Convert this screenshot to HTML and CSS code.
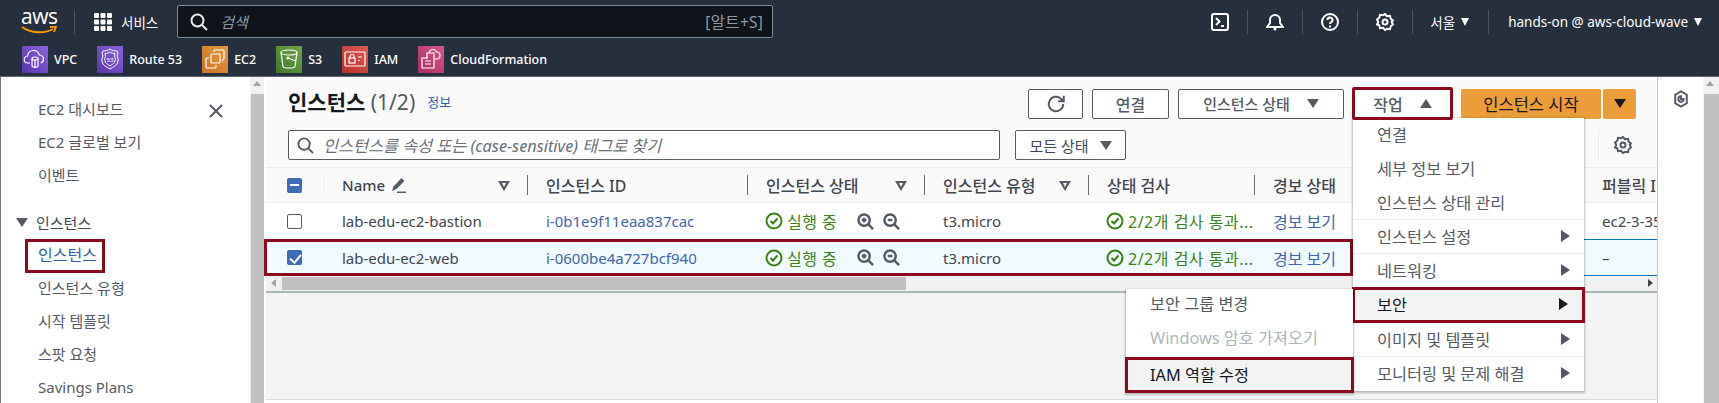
FILE: index.html
```html
<!DOCTYPE html>
<html lang="ko">
<head>
    <meta charset="UTF-8">
    <title>인스턴스 | EC2</title>
    <link rel="stylesheet" href="styles.css">
</head>
<body>
    <header class="nav">
        <div class="nav-top">
            <div class="logo">
                <span class="logo-word">aws</span>
                <svg class="logo-smile" viewBox="0 0 36 9" width="36" height="9"><path d="M1 1c9 6.500 22 7 31 2" fill="none" stroke="#f90" stroke-width="2"/><path d="M29 1l6-.5-2 5.500" fill="none" stroke="#f90" stroke-width="1.800"/></svg>
            </div>
            <span class="nav-sep nav-sep-logo"></span>
            <svg class="grid-icon" viewBox="0 0 18 18" width="18" height="18" fill="#fff"><rect width="5" height="5" rx="1"/><rect x="6.500" width="5" height="5" rx="1"/><rect x="13" width="5" height="5" rx="1"/><rect y="6.500" width="5" height="5" rx="1"/><rect x="6.500" y="6.500" width="5" height="5" rx="1"/><rect x="13" y="6.500" width="5" height="5" rx="1"/><rect y="13" width="5" height="5" rx="1"/><rect x="6.500" y="13" width="5" height="5" rx="1"/><rect x="13" y="13" width="5" height="5" rx="1"/></svg>
            <span class="nav-services">서비스</span>
            <div class="nav-search">
                <svg viewBox="0 0 18 18" width="18" height="18" fill="none" stroke="#e9ebed" stroke-width="2"><circle cx="7.500" cy="7.500" r="6"/><path d="M12 12l5 5"/></svg>
                <span class="nav-search-text">검색</span>
                <span class="nav-search-key">[알트+S]</span>
            </div>
            <div class="nav-right">
                <span class="nav-icon"><svg viewBox="0 0 18 18" width="18" height="18" fill="none" stroke="#fff" stroke-width="2"><rect x="1" y="1" width="16" height="16" rx="2"/><path d="M5 5l3.500 3.500L5 12M10 13h3"/></svg></span>
                <span class="nav-sep"></span>
                <span class="nav-icon"><svg viewBox="0 0 18 18" width="18" height="18" fill="none" stroke="#fff" stroke-width="2"><path d="M1 14h16l-3-4V7a5 5 0 0 0-10 0v3z"/><circle cx="9" cy="16" r="1.500" fill="#fff" stroke="none"/></svg></span>
                <span class="nav-sep"></span>
                <span class="nav-icon"><svg viewBox="0 0 18 18" width="18" height="18" fill="none" stroke="#fff" stroke-width="2"><circle cx="9" cy="9" r="8"/><path d="M6.500 7a2.500 2.500 0 1 1 3.500 2.300c-.7.4-1 .8-1 1.700"/><path d="M9 12.500v2"/></svg></span>
                <span class="nav-sep"></span>
                <span class="nav-icon"><svg viewBox="0 0 18 18" width="18" height="18" fill="none" stroke="#fff" stroke-width="2"><path d="M9 1l2 2.200 3-.4.700 2.900 2.300 1.800L15.700 9l1.300 2.500-2.300 1.800-.7 2.900-3-.4L9 17l-2-2.200-3 .4-.7-2.900L1 11.500 2.300 9 1 6.500l2.300-1.800.7-2.900 3 .4z"/><circle cx="9" cy="9" r="2.500"/></svg></span>
                <span class="nav-sep"></span>
                <span class="nav-menu nav-region">서울<i class="tri tri-down tri-white"></i></span>
                <span class="nav-sep"></span>
                <span class="nav-menu nav-account">hands-on @ aws-cloud-wave<i class="tri tri-down tri-white"></i></span>
            </div>
        </div>
        <div class="nav-shortcuts">
            <a class="shortcut"><span class="svc svc-purple"><svg viewBox="0 0 26 26" fill="none" stroke="#fff" stroke-width="1.200"><path d="M8 17H6a3.500 3.500 0 0 1-.5-7c.5-3.500 3-5.500 6-5.500 3 0 5 2 5.800 4.500 2.500.2 4.200 2 4.200 4.200 0 2-1 3.300-2.800 3.800"/><ellipse cx="13" cy="12.500" rx="3" ry="1.500"/><path d="M10 12.500v7c0 2.500 6 2.500 6 0v-7M13 14v7"/></svg></span>VPC</a>
            <a class="shortcut"><span class="svc svc-purple"><svg viewBox="0 0 26 26" fill="none" stroke="#fff" stroke-width="1"><path d="M13 3c2 1.500 4 2 7 2l1 2-1 3c1.500 3 1.500 5 0 8-1 2-4 3-7 5-3-2-6-3-7-5-1.500-3-1.500-5 0-8L5 7l1-2c3 0 5-.5 7-2z"/><path d="M13 6c1.500 1 3 1.500 5 1.500l-.5 3c1 2 1 3.500 0 6-1 1.500-3 2-4.500 3.500-1.500-1.500-3.500-2-4.500-3.500-1-2.500-1-4 0-6l-.5-3C10 7.500 11.500 7 13 6z"/><text x="13" y="16" text-anchor="middle" class="svc-text" fill="#fff" stroke="none">53</text></svg></span>Route 53</a>
            <a class="shortcut"><span class="svc svc-orange"><svg viewBox="0 0 26 26" fill="none" stroke="#fff" stroke-width="1.200"><rect x="9" y="8" width="9" height="9" rx="1"/><path d="M13 4h8c.6 0 1 .4 1 1v8M4 13v8c0 .6.4 1 1 1h8M4 13c0-.6.4-1 1-1h2M13 22c.6 0 1-.4 1-1v-2M13 4c-.6 0-1 .4-1 1v1M21 13v1c0 .6-.4 1-1 1"/></svg></span>EC2</a>
            <a class="shortcut"><span class="svc svc-green"><svg viewBox="0 0 26 26" fill="none" stroke="#fff" stroke-width="1.200"><ellipse cx="13" cy="6.500" rx="8" ry="2.500"/><path d="M5 6.500l2 14c.3 2 11.700 2 12 0l2-14"/><path d="M12 12l8 3"/><circle cx="12" cy="12" r="1" fill="#fff"/></svg></span>S3</a>
            <a class="shortcut"><span class="svc svc-red"><svg viewBox="0 0 26 26" fill="none" stroke="#fff" stroke-width="1.200"><rect x="3" y="6" width="20" height="14" rx="1"/><rect x="7" y="12" width="6" height="5"/><path d="M8 12v-1.500a2 2 0 0 1 4 0V12M16 11h4M16 14.500h2"/></svg></span>IAM</a>
            <a class="shortcut"><span class="svc svc-pink"><svg viewBox="0 0 26 26" fill="none" stroke="#fff" stroke-width="1.200"><path d="M9 7h7v15H4V12h5z"/><path d="M7 15h6M7 18h6M7 12h3"/><path d="M11 7c.3-2 2-3.500 4-3.500 1.800 0 3 1 3.500 2.500 2 .1 3.500 1.600 3.500 3.500S20.500 13 18.500 13H16"/></svg></span>CloudFormation</a>
        </div>
    </header>

    <div class="page">
        <aside class="sidebar">
            <button class="side-close">
                <svg viewBox="0 0 16 16" width="16" height="16" fill="none" stroke="#545b64" stroke-width="2"><path d="M2 2l12 12M14 2L2 14"/></svg>
            </button>
            <ul class="side-list">
                <li>EC2 대시보드</li>
                <li>EC2 글로벌 보기</li>
                <li>이벤트</li>
            </ul>
            <div class="side-section"><i class="tri tri-down tri-gray"></i>인스턴스</div>
            <ul class="side-list side-sub">
                <li class="side-active"><span class="red-box">인스턴스</span></li>
                <li>인스턴스 유형</li>
                <li>시작 템플릿</li>
                <li>스팟 요청</li>
                <li>Savings Plans</li>
            </ul>
        </aside>
        <div class="vscroll vscroll-side"><i class="tri tri-up tri-scroll"></i><span class="vthumb"></span></div>

        <main class="main">
            <div class="toolbar">
                <h1 class="title">인스턴스 <span class="count">(1/2)</span></h1>
                <a class="info">정보</a>
                <div class="actions">
                    <button class="btn btn-refresh"><svg viewBox="0 0 18 18" width="20" height="20" fill="none" stroke="#545b64" stroke-width="1.800"><path d="M15.500 9a6.500 6.500 0 1 1-2-4.700L16 6.500M16 1.500v5h-5"/></svg></button>
                    <button class="btn btn-connect">연결</button>
                    <button class="btn btn-state">인스턴스 상태<i class="tri tri-down tri-gray"></i></button>
                    <button class="btn btn-action">작업<i class="tri tri-up tri-gray"></i></button>
                    <button class="btn btn-start">인스턴스 시작</button>
                    <button class="btn btn-start-more"><i class="tri tri-down tri-dark"></i></button>
                </div>
            </div>
            <div class="filter-row">
                <div class="filter">
                    <svg viewBox="0 0 18 18" width="17" height="17" fill="none" stroke="#545b64" stroke-width="2"><circle cx="7.500" cy="7.500" r="6"/><path d="M12 12l5 5"/></svg>
                    <span>인스턴스를 속성 또는 (case-sensitive) 태그로 찾기</span>
                </div>
                <button class="btn btn-all">모든 상태<i class="tri tri-down tri-gray"></i></button>
                <span class="filter-sep"></span>
                <svg class="filter-gear" viewBox="0 0 18 18" width="18" height="18" fill="none" stroke="#545b64" stroke-width="2"><path d="M9 1l2 2.200 3-.4.700 2.900 2.300 1.800L15.700 9l1.300 2.500-2.300 1.800-.7 2.900-3-.4L9 17l-2-2.200-3 .4-.7-2.900L1 11.500 2.300 9 1 6.500l2.300-1.800.7-2.900 3 .4z"/><circle cx="9" cy="9" r="2.500"/></svg>
            </div>

            <div class="table">
                <div class="row row-head">
                    <div class="cell cell-check"><span class="check check-mixed"></span></div>
                    <div class="cell cell-div">Name <svg class="pencil" viewBox="0 0 16 16" width="16" height="16" fill="#545b64"><path d="M1 14l1.500-4.500L10.500 1l3 3-8 8z"/><path d="M6 14.500h9V16H6z"/></svg><i class="col-filter"></i></div>
                    <div class="cell cell-div cell-ko">인스턴스 ID</div>
                    <div class="cell cell-div cell-ko">인스턴스 상태<i class="col-filter"></i></div>
                    <div class="cell cell-div cell-ko">인스턴스 유형<i class="col-filter"></i></div>
                    <div class="cell cell-div cell-ko">상태 검사</div>
                    <div class="cell cell-div cell-ko">경보 상태</div>
                    <div class="cell cell-ko">퍼블릭 IPv4 DNS</div>
                </div>
                <div class="row">
                    <div class="cell cell-check"><span class="check"></span></div>
                    <div class="cell">lab-edu-ec2-bastion</div>
                    <div class="cell link">i-0b1e9f11eaa837cac</div>
                    <div class="cell ok"><svg class="ok-icon" viewBox="0 0 18 18" width="18" height="18" fill="none" stroke="#3b8217" stroke-width="2"><circle cx="9" cy="9" r="7.500"/><path d="M5.500 9l2.500 2.500 4.500-5"/></svg>실행 중<span class="zooms"><svg viewBox="0 0 18 18" width="17" height="17" fill="none" stroke="#545b64" stroke-width="2.600"><circle cx="7.500" cy="7.500" r="6"/><path d="M12 12l5 5M5 7.500h5M7.500 5v5"/></svg><svg viewBox="0 0 18 18" width="17" height="17" fill="none" stroke="#545b64" stroke-width="2.600"><circle cx="7.500" cy="7.500" r="6"/><path d="M12 12l5 5M5 7.500h5"/></svg></span></div>
                    <div class="cell">t3.micro</div>
                    <div class="cell ok"><svg class="ok-icon" viewBox="0 0 18 18" width="18" height="18" fill="none" stroke="#3b8217" stroke-width="2"><circle cx="9" cy="9" r="7.500"/><path d="M5.500 9l2.500 2.500 4.500-5"/></svg>2/2개 검사 통과...</div>
                    <div class="cell link cell-ko">경보 보기</div>
                    <div class="cell">ec2-3-35-100-20.ap-northeast-2</div>
                </div>
                <div class="row row-selected">
                    <div class="cell cell-check"><span class="check check-on"></span></div>
                    <div class="cell">lab-edu-ec2-web</div>
                    <div class="cell link">i-0600be4a727bcf940</div>
                    <div class="cell ok"><svg class="ok-icon" viewBox="0 0 18 18" width="18" height="18" fill="none" stroke="#3b8217" stroke-width="2"><circle cx="9" cy="9" r="7.500"/><path d="M5.500 9l2.500 2.500 4.500-5"/></svg>실행 중<span class="zooms"><svg viewBox="0 0 18 18" width="17" height="17" fill="none" stroke="#545b64" stroke-width="2.600"><circle cx="7.500" cy="7.500" r="6"/><path d="M12 12l5 5M5 7.500h5M7.500 5v5"/></svg><svg viewBox="0 0 18 18" width="17" height="17" fill="none" stroke="#545b64" stroke-width="2.600"><circle cx="7.500" cy="7.500" r="6"/><path d="M12 12l5 5M5 7.500h5"/></svg></span></div>
                    <div class="cell">t3.micro</div>
                    <div class="cell ok"><svg class="ok-icon" viewBox="0 0 18 18" width="18" height="18" fill="none" stroke="#3b8217" stroke-width="2"><circle cx="9" cy="9" r="7.500"/><path d="M5.500 9l2.500 2.500 4.500-5"/></svg>2/2개 검사 통과...</div>
                    <div class="cell link cell-ko">경보 보기</div>
                    <div class="cell">–</div>
                </div>
                <div class="hscroll"><i class="tri tri-left"></i><span class="hthumb"></span><i class="tri tri-right"></i></div>
            </div>
            <div class="main-empty"></div>
        </main>

        <aside class="side-panel">
            <svg viewBox="0 0 18 20" width="16" height="18" fill="none" stroke="#545b64" stroke-width="2.200"><path d="M9 1.500l6.500 3.700v9.600L9 18.500l-6.500-3.700V5.200z"/><path d="M9 7a3 3 0 1 0 3 3H9z"/></svg>
        </aside>
        <div class="vscroll vscroll-page"><i class="tri tri-up tri-scroll"></i><span class="vthumb"></span></div>

        <!-- red annotation round the selected row -->
        <div class="mark-row"></div>

        <ul class="menu menu-action">
            <li class="menu-item">연결</li>
            <li class="menu-item">세부 정보 보기</li>
            <li class="menu-item menu-last">인스턴스 상태 관리</li>
            <li class="menu-item menu-last">인스턴스 설정<i class="tri tri-right-lg"></i></li>
            <li class="menu-item menu-short">네트워킹<i class="tri tri-right-lg"></i></li>
            <li class="menu-item menu-hot">보안<i class="tri tri-right-lg"></i></li>
            <li class="menu-item menu-last">이미지 및 템플릿<i class="tri tri-right-lg"></i></li>
            <li class="menu-item">모니터링 및 문제 해결<i class="tri tri-right-lg"></i></li>
        </ul>
        <ul class="menu menu-security">
            <li class="menu-item menu-first">보안 그룹 변경</li>
            <li class="menu-item menu-off">Windows 암호 가져오기</li>
            <li class="menu-item menu-hot">IAM 역할 수정</li>
        </ul>
    </div>
</body>
</html>
```

FILE: styles.css
```css
* {
    box-sizing: border-box;
}

body {
    margin: 0;
    height: 403px;
    overflow: hidden;
    background: #fff;
    color: #16191f;
    font-family: "Noto Sans", "Noto Sans CJK KR", sans-serif;
    font-size: 15px;
}

ul {
    list-style: none;
    margin: 0;
    padding: 0;
}

button {
    font: inherit;
    color: inherit;
}

/* triangles */
.tri {
    display: inline-block;
    width: 0;
    height: 0;
    border-style: solid;
    border-color: transparent;
}

.tri-down {
    border-width: 9px 6px 0;
    border-top-color: currentColor;
}

.tri-up {
    border-width: 0 6px 9px;
    border-bottom-color: currentColor;
}

.tri-white {
    color: #fff;
    border-width: 8px 4.500px 0;
}

.tri-gray {
    color: #545b64;
}

.tri-dark {
    color: #16191f;
}

/* top nav */
.nav {
    height: 77px;
    background: #262f3e;
    border-bottom: 1px solid #5f6670;
    color: #fff;
}

.nav-top {
    display: flex;
    align-items: center;
    height: 42px;
    padding: 1px 21px 0;
}

.logo {
    display: flex;
    flex-direction: column;
    width: 36px;
}

.logo-word {
    font-family: "Open Sans", sans-serif;
    font-size: 21px;
    line-height: 17px;
    letter-spacing: -0.5px;
    text-align: center;
}

.logo-smile {
    margin-top: 1px;
}

.nav-sep {
    width: 1px;
    height: 24px;
    background: #4b5462;
}

.nav-sep-logo {
    margin-left: 17px;
}

.grid-icon {
    margin-left: 19px;
}

.nav-services {
    margin-left: 9px;
    font-size: 13.500px;
}

.nav-search {
    display: flex;
    align-items: center;
    width: 596px;
    height: 33px;
    margin-left: 19px;
    padding: 0 9px 0 12px;
    background: #0f141a;
    border: 1px solid #7d8998;
    border-radius: 2px;
}

.nav-search-text {
    margin-left: 12px;
    font-style: italic;
    color: #8d99a8;
}

.nav-search-key {
    margin-left: auto;
    color: #8d99a8;
    font-size: 15.500px;
    letter-spacing: 0.3px;
}

.nav-right {
    display: flex;
    align-items: center;
    margin-left: auto;
    gap: 16px;
    margin-right: -7px;
    font-size: 13.500px;
}

.nav-icon {
    display: flex;
    width: 18px;
    margin: 0 2px;
}

.nav-menu {
    display: flex;
    align-items: center;
    gap: 6px;
    margin: 0 3px;
}

.nav-region {
    margin-left: 1px;
}

.nav-shortcuts {
    display: flex;
    height: 34px;
    padding: 4px 0 0 22px;
    gap: 20px;
}

.shortcut {
    display: flex;
    align-items: center;
    gap: 6px;
    height: 27px;
    font-size: 12.500px;
    font-weight: 500;
}

.svc {
    display: block;
    width: 26px;
    height: 27px;
}

.svc svg {
    display: block;
}

.svc-text {
    font-size: 6px;
    font-family: "Noto Sans", sans-serif;
}

.svc-purple {
    background: linear-gradient(45deg, #5a35a8, #8a62e0);
}

.svc-orange {
    background: linear-gradient(45deg, #c8742a, #e8983b);
}

.svc-green {
    background: linear-gradient(45deg, #3f7a2a, #6fa544);
}

.svc-red {
    background: linear-gradient(45deg, #b5302a, #dd5a50);
}

.svc-pink {
    background: linear-gradient(45deg, #a92a63, #d9578c);
}

/* page */
.page {
    position: relative;
    display: flex;
    height: 326px;
}

.sidebar {
    position: relative;
    width: 250px;
    padding: 16px 0 0 37px;
    border-left: 1px solid #777;
    font-size: 15px;
    color: #545b64;
    overflow: hidden;
}

.side-close {
    position: absolute;
    top: 26px;
    left: 207px;
    padding: 0;
    display: flex;
    border: 0;
    background: none;
}

.side-list li {
    height: 33px;
    line-height: 33px;
    white-space: nowrap;
}

.side-section {
    display: flex;
    align-items: center;
    gap: 8px;
    height: 33px;
    margin: 14px 0 0 -22px;
    color: #414750;
}

.side-sub .side-active {
    color: #2a5fb0;
}

.red-box {
    display: inline-block;
    height: 34px;
    margin-left: -13px;
    padding: 0 5px 0 10px;
    border: 3px solid #8b0a1e;
    font-size: 16px;
    line-height: 27px;
    vertical-align: top;
}

.vscroll {
    position: relative;
    width: 14px;
    background: #f1f1f1;
}

.vscroll .tri-scroll {
    position: absolute;
    top: 4px;
    left: 3px;
    color: #a3a3a3;
    border-width: 0 4px 5px;
}

.vthumb {
    position: absolute;
    top: 17px;
    bottom: 0;
    left: 1px;
    right: 0;
    background: #c1c1c1;
}

.vscroll-page {
    width: 16px;
}

.main {
    flex: none;
    width: 1392px;
    margin-left: 2px;
    display: flex;
    flex-direction: column;
    background: #fff;
    border-right: 1px solid #c5c8cc;
    overflow: hidden;
}

.toolbar {
    display: flex;
    flex: none;
    align-items: center;
    height: 53px;
    padding: 0 21px 0 22px;
    background: #fafafa;
}

.title {
    margin: -6px 0 0;
    font-size: 21px;
    font-weight: 700;
}

.count {
    font-weight: 400;
    color: #545b64;
}

.info {
    margin: -4px 0 0 12px;
    font-size: 13px;
    color: #2a5fb0;
}

.actions {
    display: flex;
    margin-left: auto;
    gap: 9px;
    align-items: center;
}

.btn {
    display: inline-flex;
    align-items: center;
    justify-content: center;
    gap: 17px;
    height: 30px;
    padding: 0;
    background: #fff;
    border: 1px solid #545b64;
    border-radius: 2px;
    color: #545b64;
    font-size: 15px;
    font-weight: 500;
}

.btn-refresh {
    width: 55px;
}

.btn-connect {
    width: 77px;
    font-size: 16px;
}

.btn-state {
    width: 166px;
}

.btn-action {
    position: relative;
    z-index: 2;
    width: 101px;
    height: 33px;
    margin-left: -1px;
    border: 3px solid #8b0a1e;
    font-size: 16px;
}

.btn-start {
    width: 140px;
    margin-left: -1px;
    background: #ec9c39;
    border: 0;
    color: #16191f;
    font-size: 16.500px;
    font-weight: 400;
}

.btn-start-more {
    width: 33px;
    margin-left: -7px;
    background: #ec9c39;
    border: 0;
}

.filter-row {
    display: flex;
    flex: none;
    align-items: flex-start;
    height: 37px;
    padding: 0 0 0 22px;
    background: #fafafa;
}

.filter {
    display: flex;
    align-items: center;
    gap: 9px;
    width: 712px;
    height: 30px;
    padding: 0 8px;
    background: #fff;
    border: 1px solid #545b64;
    border-radius: 2px;
    color: #687078;
    font-size: 16.300px;
    font-style: italic;
}

.btn-all {
    width: 111px;
    margin-left: 15px;
    gap: 11px;
    color: #414750;
    font-weight: 400;
}

.filter-sep {
    width: 1px;
    height: 30px;
    margin-left: 472px;
    background: #eaeded;
}

.filter-gear {
    margin: 6px 0 0 15px;
}

.table {
    flex: none;
    border-top: 1px solid #eaeded;
    border-bottom: 2px solid #aab7b8;
    background: #fff;
}

.row {
    display: grid;
    grid-template-columns: 57px 204px 220px 177px 164px 166px 329px 218px;
    height: 36px;
    white-space: nowrap;
}

.row-head {
    height: 35px;
    background: #fafafa;
    border-bottom: 1px solid #eaeded;
    font-weight: 500;
    color: #545b64;
}

.row-selected {
    height: 37px;
    background: #f1faff;
    border-top: 1px solid #0073bb;
    border-bottom: 1px solid #0073bb;
}

.cell {
    position: relative;
    display: flex;
    align-items: center;
    padding-left: 19px;
    overflow: hidden;
    color: #414750;
}

.cell-ko {
    font-size: 16px;
}

.cell-check {
    padding-left: 21px;
}

.cell-div::before {
    content: "";
    position: absolute;
    left: 0;
    top: 7px;
    bottom: 7px;
    width: 1px;
    background: #687078;
}

.row-head .cell:nth-child(2)::before {
    background: #eaeded;
}

.check {
    width: 15px;
    height: 15px;
    border: 1px solid #545b64;
    border-radius: 2px;
    background: #fff;
}

.check-mixed {
    border: 0;
    background: linear-gradient(#fff, #fff) center / 9px 2px no-repeat, #3d6db5;
}

.check-on {
    border: 0;
    background: #3d6db5;
    position: relative;
}

.check-on::after {
    content: "";
    position: absolute;
    left: 5px;
    top: 1.500px;
    width: 5px;
    height: 9px;
    border: solid #fff;
    border-width: 0 2px 2px 0;
    transform: rotate(40deg);
}

.pencil {
    margin-left: 6px;
}

.col-filter {
    position: absolute;
    right: 17px;
    top: 50%;
    margin-top: -4px;
    width: 0;
    height: 0;
    border-style: solid;
    border-width: 10px 6px 0;
    border-color: #545b64 transparent transparent;
}

.col-filter::after {
    content: "";
    position: absolute;
    top: -8px;
    left: -2.500px;
    width: 0;
    height: 0;
    border-style: solid;
    border-width: 4px 2.500px 0;
    border-color: #fafafa transparent transparent;
}

.link {
    color: #3d66ad;
}

.ok {
    color: #3b8217;
    gap: 4px;
    font-size: 16px;
    letter-spacing: 0.5px;
}

.ok-icon {
    flex: none;
    margin-left: -1px;
}

.zooms {
    display: flex;
    gap: 9px;
    margin-left: 16px;
}

.hscroll {
    position: relative;
    height: 15px;
    background: #f1f1f1;
}

.hthumb {
    position: absolute;
    left: 16px;
    top: 1px;
    width: 624px;
    height: 13px;
    background: #c1c1c1;
}

.hscroll .tri-left {
    position: absolute;
    left: 5px;
    top: 3px;
    border-width: 4px 5px 4px 0;
    border-right-color: #a3a3a3;
}

.hscroll .tri-right {
    position: absolute;
    left: 1382px;
    top: 3px;
    border-width: 4px 0 4px 5px;
    border-left-color: #444;
}

.main-empty {
    flex: 1;
    background: #f2f3f3;
    border-bottom: 1px solid #d5dbdb;
    margin-bottom: 3px;
}

.side-panel {
    display: flex;
    flex: 1;
    justify-content: center;
    padding-top: 13px;
}

.mark-row {
    position: absolute;
    top: 162px;
    left: 264px;
    width: 1089px;
    height: 37px;
    border: 3px solid #8b0a1e;
}

/* dropdown menus */
.menu {
    position: absolute;
    z-index: 1;
    background: #fff;
    box-shadow: 0 1px 2px 1px rgba(0, 0, 0, 0.25);
    color: #545b64;
    font-size: 16.300px;
}

.menu-item {
    position: relative;
    display: flex;
    align-items: center;
    justify-content: space-between;
    height: 34px;
    padding: 0 14px 2px 24px;
    white-space: nowrap;
}

.menu-last {
    border-bottom: 1px solid #eaeded;
}

.menu-short {
    height: 33px;
}

.tri-right-lg {
    color: #545b64;
    border-width: 6px 0 6px 9px;
    border-left-color: currentColor;
}

.menu-hot {
    background: #f2f3f3;
    color: #16191f;
    height: 36px;
    margin: 0 -1px;
    border: 3px solid #8b0a1e;
    padding-left: 22px;
}

.menu-hot .tri-right-lg {
    color: #16191f;
}

.menu-off {
    height: 38px;
    color: #aab7b8;
}

.menu-first {
    height: 30px;
}

.menu-action {
    top: 41px;
    left: 1353px;
    width: 231px;
}

.menu-security {
    top: 212px;
    left: 1126px;
    width: 227px;
}
```
